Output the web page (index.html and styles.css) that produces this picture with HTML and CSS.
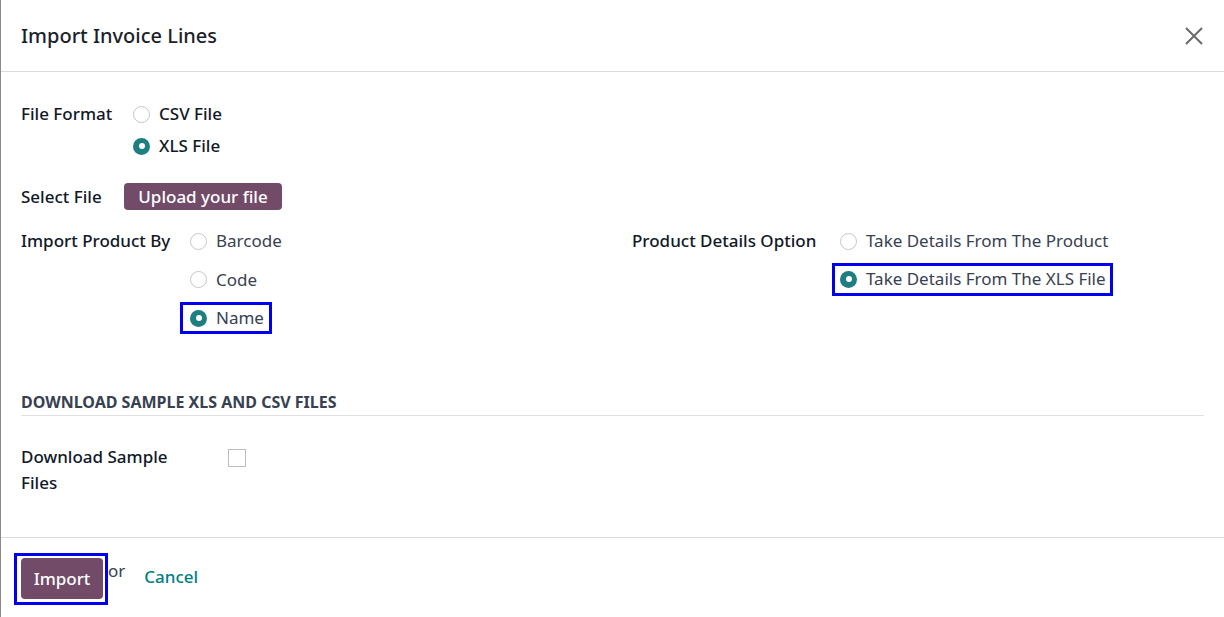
FILE: index.html
```html
<!DOCTYPE html>
<html>
<head>
<meta charset="utf-8">
<link rel="stylesheet" href="styles.css">
</head>
<body>
<div class="modal">
  <header class="modal-header">
    <h4 class="modal-title">Import Invoice Lines</h4>
    <button class="close" aria-label="Close">
      <svg width="20" height="20" viewBox="0 0 20 20"><path d="M2 2 L18 18 M18 2 L2 18" stroke="#6b6b6b" stroke-width="2" fill="none"/></svg>
    </button>
  </header>
  <main class="modal-body">
    <div class="row row-format">
      <div class="label lbl-format">File Format</div>
      <div class="options opts-format">
        <label class="opt"><span class="radio"></span><span class="opt-text">CSV File</span></label>
        <label class="opt"><span class="radio checked"></span><span class="opt-text">XLS File</span></label>
      </div>
    </div>
    <div class="row row-file">
      <div class="label lbl-file">Select File</div>
      <button class="btn btn-primary btn-upload">Upload your file</button>
    </div>
    <div class="cols">
      <div class="row row-prod">
        <div class="label lbl-prod">Import Product By</div>
        <div class="options opts-prod">
          <label class="opt"><span class="radio"></span><span class="opt-text">Barcode</span></label>
          <label class="opt"><span class="radio"></span><span class="opt-text">Code</span></label>
          <label class="opt marked mark-name"><span class="radio checked"></span><span class="opt-text">Name</span></label>
        </div>
      </div>
      <div class="row row-details">
        <div class="label lbl-details">Product Details Option</div>
        <div class="options opts-details">
          <label class="opt"><span class="radio"></span><span class="opt-text">Take Details From The Product</span></label>
          <label class="opt marked mark-xls"><span class="radio checked"></span><span class="opt-text">Take Details From The XLS File</span></label>
        </div>
      </div>
    </div>
    <div class="separator">DOWNLOAD SAMPLE XLS AND CSV FILES</div>
    <div class="row row-sample">
      <div class="label lbl-sample"><span class="lbl-sample-text">Download Sample Files</span></div>
      <span class="checkbox"></span>
    </div>
  </main>
  <footer class="modal-footer">
    <span class="mark-import"><button class="btn btn-primary btn-import">Import</button></span>
    <span class="or">or</span>
    <a class="cancel">Cancel</a>
  </footer>
</div>
</body>
</html>
```

FILE: styles.css
```css
* { box-sizing: border-box; }
html, body { margin: 0; padding: 0; background: #fff; }
body {
  font-family: "Noto Sans", "DejaVu Sans", sans-serif;
  color: #111827;
  font-size: 17px;
}
.modal {
  width: 1224px;
  height: 617px;
  border-left: 1px solid #8a8a8a;
  display: flex;
  flex-direction: column;
}
.modal-header {
  height: 72px;
  flex: none;
  display: flex;
  align-items: center;
  justify-content: space-between;
  padding: 0 20px 0 20px;
  border-bottom: 1px solid #dcdcdc;
}
.modal-title {
  margin: 0;
  font-size: 20px;
  font-weight: 500;
  color: #1c1f2b;
}
.close {
  border: 0;
  background: none;
  padding: 0;
  width: 20px;
  height: 20px;
  display: flex;
}
.modal-body {
  flex: 1;
  padding: 30px 20px 0 20px;
}
.row { display: flex; align-items: flex-start; }
.label {
  font-weight: 500;
  line-height: 24px;
  color: #111827;
  flex: none;
}
.lbl-format { width: 112px; }
.lbl-file { width: 103px; line-height: 27px; }
.lbl-prod { width: 169px; }
.lbl-details { width: 208px; }
.lbl-sample { width: 207px; line-height: 26px; }
.lbl-sample-text { display: block; max-width: 175px; }
.options { display: flex; flex-direction: column; }
.opts-format { gap: 8px; }
.opts-prod { gap: 14.5px; }
.opts-details { gap: 14px; }
.opt {
  display: inline-flex;
  align-items: center;
  line-height: 24px;
  color: #374151;
  align-self: flex-start;
}
.opts-format .opt { color: #111827; font-weight: 500; }
.radio {
  width: 17px;
  height: 17px;
  border-radius: 50%;
  border: 1px solid #c6c6c6;
  background: #fff;
  margin-right: 9px;
  flex: none;
  position: relative;
}
.radio.checked {
  border: 0;
  background: #1e7e80;
}
.radio.checked::after {
  content: "";
  position: absolute;
  left: 5.5px; top: 5.5px;
  width: 6px; height: 6px;
  border-radius: 50%;
  background: #fff;
}
.marked {
  outline: 3px solid #0000ee;
}
.mark-name {
  padding: 1px 5px 1px 7px;
  margin: -1px -5px -1px -7px;
}
.mark-xls {
  padding: 1px 4px 2px 5px;
  margin: -1px -4px -2px -5px;
}
.row-file { margin-top: 25px; align-items: center; }
.btn {
  border: 0;
  font-family: inherit;
  color: #fff;
  border-radius: 4px;
  font-weight: 500;
}
.btn-primary { background: #714b67; }
.btn-upload {
  width: 158px;
  height: 27px;
  font-size: 17px;
  padding: 0;
}
.cols { display: flex; margin-top: 19px; }
.row-prod { width: 611px; }
.separator {
  margin-top: 60px;
  font-weight: 700;
  font-size: 16px;
  color: #374151;
  padding-bottom: 1px;
  border-bottom: 1px solid #dee2e6;
  line-height: 24px;
}
.row-sample { margin-top: 28px; }
.checkbox {
  width: 18px; height: 18px;
  border: 1px solid #bdbdbd;
  margin-top: 5px;
}
.modal-footer {
  flex: none;
  height: 80px;
  border-top: 1px solid #dcdcdc;
  display: flex;
  align-items: flex-start;
  padding: 15px 0 0 13px;
}
.mark-import {
  border: 3px solid #0000ee;
  padding: 2px 2px 3px 4px;
  display: inline-flex;
}
.btn-import {
  width: 82px;
  height: 41px;
  font-size: 17px;
  padding: 0;
}
.or {
  color: #374151;
  margin-top: 6px;
  line-height: 24px;
  font-size: 17px;
}
.cancel {
  color: #017e84;
  font-weight: 500;
  font-size: 17px;
  margin-left: 19px;
  margin-top: 12px;
  line-height: 24px;
}
```
